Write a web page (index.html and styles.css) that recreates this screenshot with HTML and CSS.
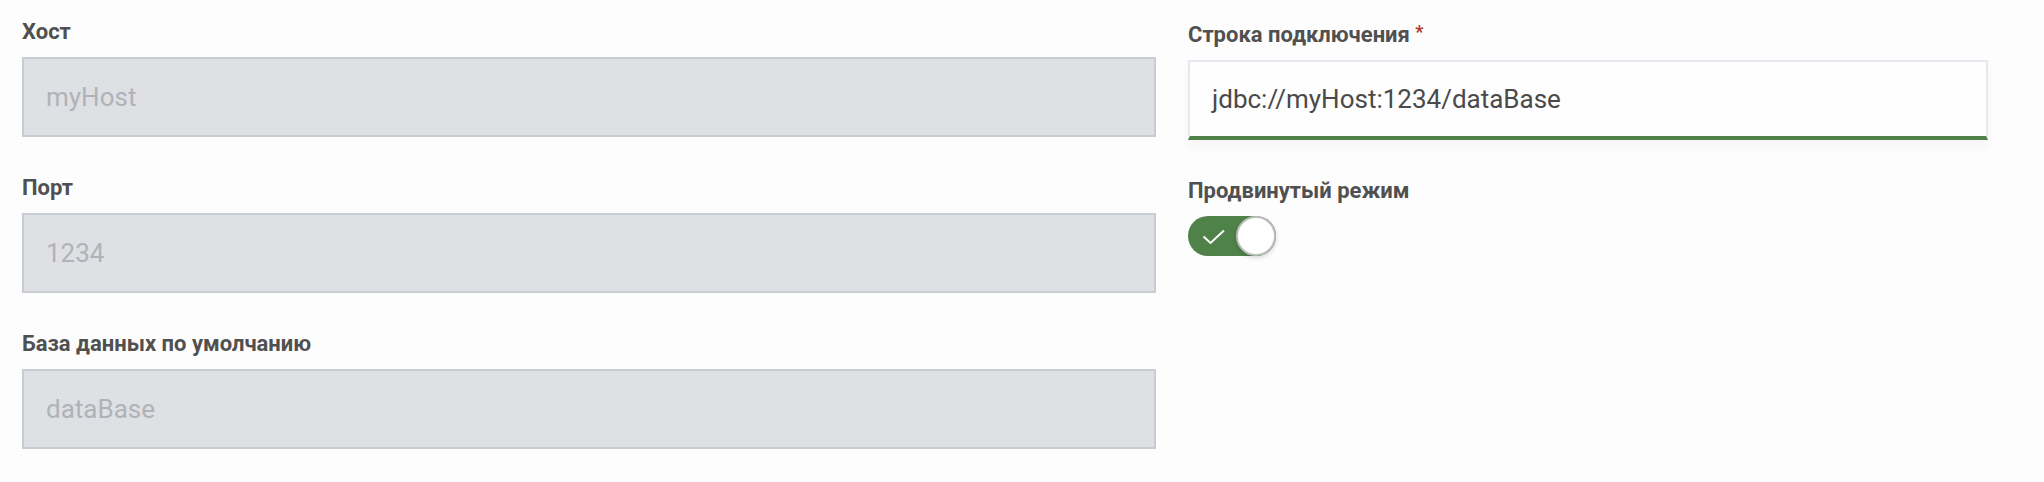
FILE: index.html
```html
<!DOCTYPE html>
<html lang="ru">
<head>
<meta charset="utf-8">
<title>Подключение</title>
<link rel="stylesheet" href="styles.css">
</head>
<body>
<div class="form">
  <div class="col col-left">
    <div class="field">
      <div class="label">Хост</div>
      <div class="input input-disabled">myHost</div>
    </div>
    <div class="field">
      <div class="label">Порт</div>
      <div class="input input-disabled">1234</div>
    </div>
    <div class="field">
      <div class="label">База данных по умолчанию</div>
      <div class="input input-disabled">dataBase</div>
    </div>
  </div>
  <div class="col col-right">
    <div class="field">
      <div class="label">Строка подключения <span class="req">*</span></div>
      <div class="input input-active">jdbc://myHost:1234/dataBase</div>
    </div>
    <div class="field">
      <div class="label">Продвинутый режим</div>
      <div class="toggle">
        <svg class="check" width="24" height="16" viewBox="0 0 24 16"><path d="M1.5 7.5 L8.5 14 L22 1.5" fill="none" stroke="#ffffff" stroke-width="2"/></svg>
        <span class="knob"></span>
      </div>
    </div>
  </div>
</div>
</body>
</html>
```

FILE: styles.css
```css
html, body {
  margin: 0;
  padding: 0;
  background: #fdfdfe;
}
body {
  font-family: Roboto, "Noto Sans", sans-serif;
  color: #505050;
}
.form {
  display: grid;
  grid-template-columns: 1134px 800px;
  column-gap: 32px;
  padding: 19px 0 0 22px;
}
.col-right {
  padding-top: 3px;
}
.field {
  display: flex;
  flex-direction: column;
  margin-bottom: 38px;
}
.label {
  font-size: 22px;
  line-height: 26px;
  font-weight: 700;
  color: #505050;
  margin-bottom: 12px;
}
.req {
  color: #b23a2c;
  font-size: 18px;
  line-height: 0;
  vertical-align: 4px;
}
.input {
  box-sizing: border-box;
  height: 80px;
  display: flex;
  align-items: center;
  padding: 0 22px;
  font-size: 26px;
}
.input-disabled {
  background: #dfe0e4;
  border: 2px solid #c8cdd4;
  color: #afb3b9;
}
.input-active {
  background: #fefefe;
  border: 2px solid #e4e9ef;
  border-bottom: 4px solid #4e8249;
  color: #4a4a4a;
  box-shadow: 0 6px 10px rgba(0, 0, 0, 0.04);
}
.toggle {
  position: relative;
  width: 88px;
  height: 40px;
  border-radius: 20px;
  background: #4e8249;
}
.check {
  position: absolute;
  left: 14px;
  top: 13px;
}
.knob {
  position: absolute;
  right: 0;
  top: 0;
  box-sizing: border-box;
  width: 40px;
  height: 40px;
  border-radius: 50%;
  background: #ffffff;
  border: 2px solid #bcbcbc;
  box-shadow: 0 2px 4px rgba(0, 0, 0, 0.15);
}
```
